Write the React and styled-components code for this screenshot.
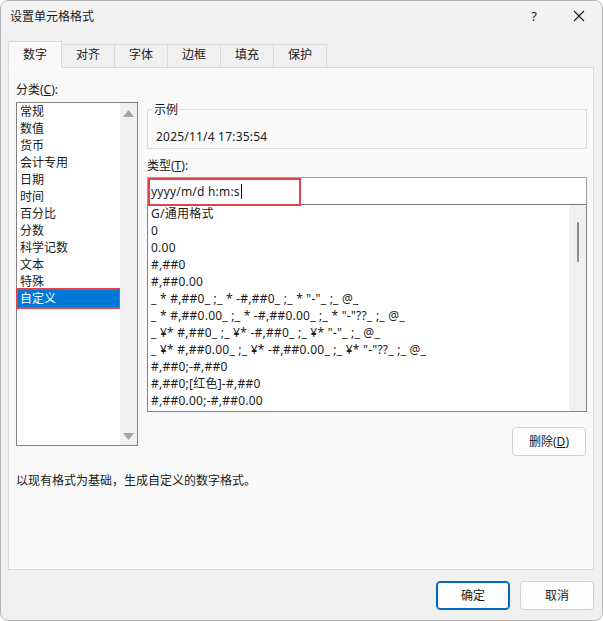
import React from 'react'
import styled, { createGlobalStyle } from 'styled-components'

const categories = ['常规', '数值', '货币', '会计专用', '日期', '时间', '百分比', '分数', '科学记数', '文本', '特殊', '自定义']
const formats = [
  'G/通用格式',
  '0',
  '0.00',
  '#,##0',
  '#,##0.00',
  '_ * #,##0_ ;_ * -#,##0_ ;_ * "-"_ ;_ @_',
  '_ * #,##0.00_ ;_ * -#,##0.00_ ;_ * "-"??_ ;_ @_',
  '_ ¥* #,##0_ ;_ ¥* -#,##0_ ;_ ¥* "-"_ ;_ @_',
  '_ ¥* #,##0.00_ ;_ ¥* -#,##0.00_ ;_ ¥* "-"??_ ;_ @_',
  '#,##0;-#,##0',
  '#,##0;[红色]-#,##0',
  '#,##0.00;-#,##0.00',
]
const tabs = ['数字', '对齐', '字体', '边框', '填充', '保护']

function CellFormatDialog() {
  let [tab, setTab] = React.useState(0)
  let [cat, setCat] = React.useState(11)
  return (
    <Window>
      <TitleBar>
        <Title>设置单元格格式</Title>
        <TitleButtons>
          <Help>?</Help>
          <svg width="12" height="12" viewBox="0 0 12 12">
            <path d="M1 1 L11 11 M11 1 L1 11" stroke="#1a1a1a" strokeWidth="1.1" fill="none" />
          </svg>
        </TitleButtons>
      </TitleBar>
      <Body>
        <TabStrip>
          {tabs.map((t, i) => (
            <Tab key={t} active={i === tab} onClick={() => setTab(i)}>{t}</Tab>
          ))}
        </TabStrip>
        <Panel>
          <Columns>
            <LeftCol>
              <Label>分类(<u>C</u>):</Label>
              <CategoryBox>
                <CategoryItems>
                  {categories.map((c, i) => (
                    <CategoryRow key={c} selected={i === cat} onClick={() => setCat(i)}>{c}</CategoryRow>
                  ))}
                </CategoryItems>
                <ArrowTrack>
                  <svg width="11" height="7" viewBox="0 0 11 7"><path d="M5.5 0 L11 7 L0 7 Z" fill="#a6a6a6" /></svg>
                  <svg width="11" height="7" viewBox="0 0 11 7"><path d="M0 0 L11 0 L5.5 7 Z" fill="#a6a6a6" /></svg>
                </ArrowTrack>
              </CategoryBox>
            </LeftCol>
            <RightCol>
              <Group>
                <GroupLegend>示例</GroupLegend>
                <SampleText>2025/11/4 17:35:54</SampleText>
              </Group>
              <TypeLabel>类型(<u>T</u>):</TypeLabel>
              <TypeInput>
                yyyy/m/d h:m:s<Caret />
                <Highlight />
              </TypeInput>
              <FormatBox>
                <FormatItems>
                  {formats.map((f) => (
                    <FormatRow key={f}>{f}</FormatRow>
                  ))}
                </FormatItems>
                <ThinTrack>
                  <Thumb />
                </ThinTrack>
              </FormatBox>
              <DeleteRow>
                <Button>删除(<u>D</u>)</Button>
              </DeleteRow>
            </RightCol>
          </Columns>
          <Description>以现有格式为基础，生成自定义的数字格式。</Description>
        </Panel>
      </Body>
      <Footer>
        <Button primary>确定</Button>
        <Button>取消</Button>
      </Footer>
    </Window>
  )
}

export default function App() {
  return (
    <>
      <GlobalStyle />
      <CellFormatDialog />
    </>
  )
}

let GlobalStyle = createGlobalStyle`
  html, body { margin: 0; padding: 0; background: #ffffff; }
  * { box-sizing: border-box; }
  body {
    font-family: "Noto Sans", "Noto Sans CJK SC", sans-serif;
    font-size: 12px;
    color: #1a1a1a;
  }
  u { text-decoration: underline; text-underline-offset: 1px; }
`

let Window = styled.div`
  width: 603px;
  height: 621px;
  background: #f0f0f0;
  border: 1px solid #b4b4b4;
  border-radius: 8px;
  overflow: hidden;
  display: flex;
  flex-direction: column;
`

let TitleBar = styled.div`
  height: 30px;
  flex: none;
  display: flex;
  align-items: center;
  justify-content: space-between;
  padding: 0 17px 0 9px;
  background: #f3f3f3;
`

let Title = styled.div`
  font-size: 12px;
  line-height: 17px;
`

let TitleButtons = styled.div`
  display: flex;
  align-items: center;
  gap: 36px;
`

let Help = styled.span`
  font-size: 13px;
  line-height: 17px;
`

let Body = styled.div`
  padding: 10px 8px 0 7px;
  display: flex;
  flex-direction: column;
`

let TabStrip = styled.div`
  display: flex;
  align-items: flex-end;
  height: 27px;
  position: relative;
  z-index: 1;
  margin-bottom: -1px;
`

let Tab = styled.div`
  width: ${(p) => (p.active ? '54px' : '53px')};
  height: ${(p) => (p.active ? '27px' : '24px')};
  display: flex;
  align-items: center;
  justify-content: center;
  padding-bottom: ${(p) => (p.active ? '0' : '3px')};
  border: 1px solid #dadada;
  border-left: ${(p) => (p.active ? '1px solid #dadada' : 'none')};
  border-bottom: ${(p) => (p.active ? '1px solid #f9f9f9' : '1px solid #dadada')};
  background: ${(p) => (p.active ? '#f9f9f9' : '#f0f0f0')};
  line-height: 17px;
  cursor: default;
`

let Panel = styled.div`
  height: 503px;
  background: #f9f9f9;
  border: 1px solid #dadada;
  padding: 13px 6px 0 7px;
`

let Columns = styled.div`
  display: flex;
  gap: 9px;
`

let LeftCol = styled.div`
  width: 122px;
  flex: none;
  display: flex;
  flex-direction: column;
`

let Label = styled.div`
  line-height: 17px;
  height: 17px;
  margin-bottom: 4px;
`

let CategoryBox = styled.div`
  height: 344px;
  border: 1px solid #828282;
  background: #ffffff;
  display: flex;
`

let CategoryItems = styled.div`
  flex: 1;
  padding-left: 1px;
`

let CategoryRow = styled.div`
  height: 17px;
  line-height: 17px;
  padding-left: 2px;
  background: ${(p) => (p.selected ? '#0078d7' : 'transparent')};
  color: ${(p) => (p.selected ? '#ffffff' : '#1a1a1a')};
  outline: ${(p) => (p.selected ? '2px solid #e2434b' : 'none')};
  margin-right: 1px;
`

let ArrowTrack = styled.div`
  width: 17px;
  flex: none;
  background: #f0f0f0;
  display: flex;
  flex-direction: column;
  justify-content: space-between;
  align-items: center;
  padding: 7px 0 5px;
`

let RightCol = styled.div`
  flex: 1;
  display: flex;
  flex-direction: column;
`

let Group = styled.fieldset`
  margin: 20px 0 0;
  padding: 0 8px;
  height: 48px;
  border: 1px solid #dcdcdc;
  border-radius: 0;
`

let GroupLegend = styled.legend`
  padding: 0 1px;
  margin-left: -3px;
  line-height: 17px;
`

let SampleText = styled.div`
  line-height: 17px;
  margin-top: 10px;
  letter-spacing: 0.2px;
`

let TypeLabel = styled.div`
  line-height: 17px;
  margin-top: 8px;
`

let TypeInput = styled.div`
  position: relative;
  margin-top: 3px;
  height: 28px;
  border: 1px solid #a0a0a0;
  border-bottom: 1px solid #7a7a7a;
  background: #ffffff;
  display: flex;
  align-items: center;
  padding-left: 3px;
  line-height: 17px;
  letter-spacing: 0.2px;
`

let Caret = styled.span`
  display: inline-block;
  width: 1px;
  height: 15px;
  background: #000000;
  margin-left: 1px;
`

let Highlight = styled.span`
  position: absolute;
  left: 0;
  top: 0;
  width: 153px;
  height: 28px;
  border: 2px solid #e2434b;
  pointer-events: none;
`

let FormatBox = styled.div`
  height: 207px;
  border: 1px solid #828282;
  border-top: none;
  background: #ffffff;
  display: flex;
`

let FormatItems = styled.div`
  flex: 1;
  padding-left: 3px;
  white-space: nowrap;
  overflow: hidden;
  letter-spacing: 0.24px;
`

let FormatRow = styled.div`
  height: 17px;
  line-height: 17px;
`

let ThinTrack = styled.div`
  width: 17px;
  flex: none;
  background: #f0f0f0;
  display: flex;
  justify-content: center;
  padding-top: 17px;
`

let Thumb = styled.div`
  width: 2px;
  height: 40px;
  border-radius: 1px;
  background: #8a8a8a;
  margin-left: 1px;
`

let DeleteRow = styled.div`
  display: flex;
  justify-content: flex-end;
  margin-top: 15px;
  padding-right: 1px;
`

let Button = styled.div`
  width: 74px;
  height: 29px;
  display: flex;
  align-items: center;
  justify-content: center;
  border-radius: 4px;
  background: #fdfdfd;
  border: 1px solid ${(p) => (p.primary ? '#0067c0' : '#d0d0d0')};
  box-shadow: ${(p) => (p.primary ? 'inset 0 0 0 1px #0067c0' : 'none')};
  line-height: 17px;
  cursor: default;
`

let Description = styled.div`
  line-height: 17px;
  margin-top: 16px;
`

let Footer = styled.div`
  display: flex;
  justify-content: flex-end;
  gap: 10px;
  padding: 11px 8px 0 0;
`
